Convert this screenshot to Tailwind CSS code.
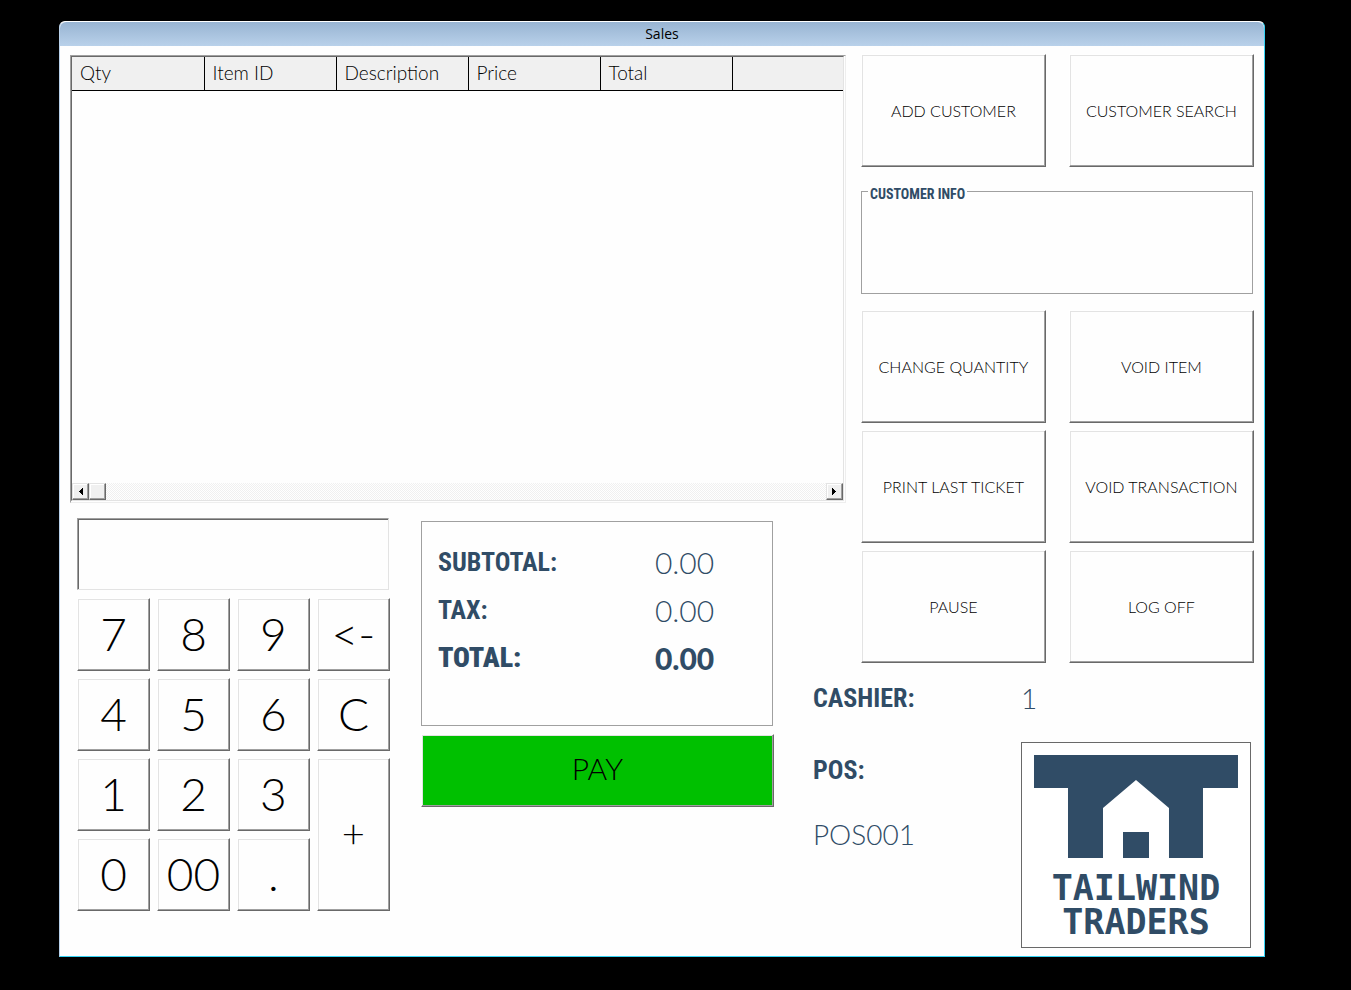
<!DOCTYPE html>
<html lang="en">
<head>
<meta charset="utf-8">
<meta name="viewport" content="width=device-width, initial-scale=1">
<title>Sales</title>
<script src="https://cdn.jsdelivr.net/npm/@tailwindcss/browser@4"></script>
</head>
<body class="flex min-h-screen bg-black pt-[21px] pr-[86px] pb-[33px] pl-[59px] font-['Lato','Open_Sans',sans-serif] font-light text-black">
<main class="flex grow flex-col rounded-t-md border border-t-white border-r-[#35d3f5] border-b-[#35d3f5] border-l-[#b9d1ea] bg-[#fefefe]">
  <header class="flex h-6 items-center justify-center rounded-t-md bg-linear-to-b from-[#98b4d2] to-[#b9d1ea]">
    <h1 class="font-['Open_Sans','Noto_Sans',sans-serif] text-sm font-normal">Sales</h1>
  </header>

  <div class="grid grow grid-cols-[minmax(0,320fr)_minmax(0,423fr)_48px_minmax(0,393fr)] grid-rows-[minmax(449px,auto)_minmax(160px,auto)_auto] px-[10px] pt-2 pb-2">

    <!-- Ticket lines -->
    <section aria-label="Ticket items" class="col-span-3 col-start-1 row-start-1 mt-px mr-[15px] flex border border-t-[#a0a0a0] border-r-[#eeeeee] border-b-[#eeeeee] border-l-[#a0a0a0]">
      <div class="mr-px mb-px flex grow flex-col border border-t-[#696969] border-r-[#e3e3e3] border-b-[#e3e3e3] border-l-[#696969]">
        <table class="w-full table-fixed border-collapse text-left text-[19px]">
          <thead>
            <tr class="h-[33px] border-b border-black bg-[#f0f0f0] leading-[30px]">
              <th scope="col" class="w-[132px] border-r border-black px-2 font-light">Qty</th>
              <th scope="col" class="w-[132px] border-r border-black px-2 font-light">Item ID</th>
              <th scope="col" class="w-[132px] border-r border-black px-2 font-light">Description</th>
              <th scope="col" class="w-[132px] border-r border-black px-2 font-light">Price</th>
              <th scope="col" class="w-[132px] border-r border-black px-2 font-light">Total</th>
              <td></td>
            </tr>
          </thead>
          <tbody></tbody>
        </table>
        <div class="mt-auto flex h-[17px] bg-[repeating-conic-gradient(#f0f0f0_0_25%,#ffffff_0_50%)] bg-size-[2px_2px]">
          <button type="button" aria-label="Scroll left" class="flex size-[17px] items-center justify-center border border-t-[#e3e3e3] border-r-[#696969] border-b-[#696969] border-l-[#e3e3e3] bg-[#f0f0f0] shadow-[inset_-1px_-1px_#a0a0a0,inset_1px_1px_#ffffff]">
            <svg class="h-[7px] w-1" viewBox="0 0 4 7" shape-rendering="crispEdges"><path d="M4 0v7L0 3.500z"/></svg>
          </button>
          <button type="button" aria-label="Scroll position" class="size-[17px] border border-t-[#e3e3e3] border-r-[#696969] border-b-[#696969] border-l-[#e3e3e3] bg-[#f0f0f0] shadow-[inset_-1px_-1px_#a0a0a0,inset_1px_1px_#ffffff]"></button>
          <button type="button" aria-label="Scroll right" class="ml-auto flex size-[17px] items-center justify-center border border-t-[#e3e3e3] border-r-[#696969] border-b-[#696969] border-l-[#e3e3e3] bg-[#f0f0f0] shadow-[inset_-1px_-1px_#a0a0a0,inset_1px_1px_#ffffff]">
            <svg class="h-[7px] w-1" viewBox="0 0 4 7" shape-rendering="crispEdges"><path d="M0 0v7L4 3.500z"/></svg>
          </button>
        </div>
      </div>
    </section>

    <!-- Customer and transaction actions -->
    <section aria-label="Actions" class="col-start-4 row-span-2 row-start-1 grid grid-cols-2 content-start gap-x-[23px] gap-y-[7px] text-base">
      <button type="button" class="h-[113px] border border-t-white border-r-[#696969] border-b-[#696969] border-l-white shadow-[inset_-1px_-1px_#a0a0a0,inset_1px_1px_#e3e3e3]">ADD CUSTOMER</button>
      <button type="button" class="h-[113px] border border-t-white border-r-[#696969] border-b-[#696969] border-l-white shadow-[inset_-1px_-1px_#a0a0a0,inset_1px_1px_#e3e3e3]">CUSTOMER SEARCH</button>
      <fieldset class="col-span-2 mt-[5px] mr-px mb-[9px] h-[115px] border border-[#a0a0a0] px-[6px]">
        <legend class="px-0.5 pt-[6px] font-['Roboto_Condensed','Liberation_Sans_Narrow',sans-serif] text-sm leading-[18px] font-bold text-[#304c66]">CUSTOMER INFO</legend>
      </fieldset>
      <button type="button" class="h-[113px] border border-t-white border-r-[#696969] border-b-[#696969] border-l-white shadow-[inset_-1px_-1px_#a0a0a0,inset_1px_1px_#e3e3e3]">CHANGE QUANTITY</button>
      <button type="button" class="h-[113px] border border-t-white border-r-[#696969] border-b-[#696969] border-l-white shadow-[inset_-1px_-1px_#a0a0a0,inset_1px_1px_#e3e3e3]">VOID ITEM</button>
      <button type="button" class="h-[113px] border border-t-white border-r-[#696969] border-b-[#696969] border-l-white shadow-[inset_-1px_-1px_#a0a0a0,inset_1px_1px_#e3e3e3]">PRINT LAST TICKET</button>
      <button type="button" class="h-[113px] border border-t-white border-r-[#696969] border-b-[#696969] border-l-white shadow-[inset_-1px_-1px_#a0a0a0,inset_1px_1px_#e3e3e3]">VOID TRANSACTION</button>
      <button type="button" class="h-[113px] border border-t-white border-r-[#696969] border-b-[#696969] border-l-white shadow-[inset_-1px_-1px_#a0a0a0,inset_1px_1px_#e3e3e3]">PAUSE</button>
      <button type="button" class="h-[113px] border border-t-white border-r-[#696969] border-b-[#696969] border-l-white shadow-[inset_-1px_-1px_#a0a0a0,inset_1px_1px_#e3e3e3]">LOG OFF</button>
    </section>

    <!-- Keypad -->
    <section aria-label="Keypad" class="col-start-1 row-span-2 row-start-2 grid grid-cols-4 content-start gap-[7px] pt-[15px] pl-[7px] text-[46px] leading-none">
      <input type="text" aria-label="Entry" class="col-span-4 mb-px h-[72px] w-[calc(100%-1px)] border border-t-[#a0a0a0] border-r-[#e3e3e3] border-b-[#e3e3e3] border-l-[#a0a0a0] px-2 shadow-[inset_1px_1px_#696969]">
      <button type="button" class="h-[73px] border border-t-white border-r-[#696969] border-b-[#696969] border-l-white pb-0.5 shadow-[inset_-1px_-1px_#a0a0a0,inset_1px_1px_#e3e3e3]">7</button>
      <button type="button" class="h-[73px] border border-t-white border-r-[#696969] border-b-[#696969] border-l-white pb-0.5 shadow-[inset_-1px_-1px_#a0a0a0,inset_1px_1px_#e3e3e3]">8</button>
      <button type="button" class="h-[73px] border border-t-white border-r-[#696969] border-b-[#696969] border-l-white pb-0.5 shadow-[inset_-1px_-1px_#a0a0a0,inset_1px_1px_#e3e3e3]">9</button>
      <button type="button" class="h-[73px] border border-t-white border-r-[#696969] border-b-[#696969] border-l-white pb-0.5 shadow-[inset_-1px_-1px_#a0a0a0,inset_1px_1px_#e3e3e3]">&lt;-</button>
      <button type="button" class="h-[73px] border border-t-white border-r-[#696969] border-b-[#696969] border-l-white pb-0.5 shadow-[inset_-1px_-1px_#a0a0a0,inset_1px_1px_#e3e3e3]">4</button>
      <button type="button" class="h-[73px] border border-t-white border-r-[#696969] border-b-[#696969] border-l-white pb-0.5 shadow-[inset_-1px_-1px_#a0a0a0,inset_1px_1px_#e3e3e3]">5</button>
      <button type="button" class="h-[73px] border border-t-white border-r-[#696969] border-b-[#696969] border-l-white pb-0.5 shadow-[inset_-1px_-1px_#a0a0a0,inset_1px_1px_#e3e3e3]">6</button>
      <button type="button" class="h-[73px] border border-t-white border-r-[#696969] border-b-[#696969] border-l-white pb-0.5 shadow-[inset_-1px_-1px_#a0a0a0,inset_1px_1px_#e3e3e3]">C</button>
      <button type="button" class="h-[73px] border border-t-white border-r-[#696969] border-b-[#696969] border-l-white pb-0.5 shadow-[inset_-1px_-1px_#a0a0a0,inset_1px_1px_#e3e3e3]">1</button>
      <button type="button" class="h-[73px] border border-t-white border-r-[#696969] border-b-[#696969] border-l-white pb-0.5 shadow-[inset_-1px_-1px_#a0a0a0,inset_1px_1px_#e3e3e3]">2</button>
      <button type="button" class="h-[73px] border border-t-white border-r-[#696969] border-b-[#696969] border-l-white pb-0.5 shadow-[inset_-1px_-1px_#a0a0a0,inset_1px_1px_#e3e3e3]">3</button>
      <button type="button" class="row-span-2 border border-t-white border-r-[#696969] border-b-[#696969] border-l-white pb-1 text-[40px] shadow-[inset_-1px_-1px_#a0a0a0,inset_1px_1px_#e3e3e3]">+</button>
      <button type="button" class="h-[73px] border border-t-white border-r-[#696969] border-b-[#696969] border-l-white pb-0.5 shadow-[inset_-1px_-1px_#a0a0a0,inset_1px_1px_#e3e3e3]">0</button>
      <button type="button" class="h-[73px] border border-t-white border-r-[#696969] border-b-[#696969] border-l-white pb-0.5 shadow-[inset_-1px_-1px_#a0a0a0,inset_1px_1px_#e3e3e3]">00</button>
      <button type="button" class="h-[73px] border border-t-white border-r-[#696969] border-b-[#696969] border-l-white pb-0.5 shadow-[inset_-1px_-1px_#a0a0a0,inset_1px_1px_#e3e3e3]">.</button>
    </section>

    <!-- Totals and payment -->
    <section aria-label="Totals" class="col-start-2 row-span-2 row-start-2 flex flex-col gap-2 pt-[18px] pr-[39px] pl-[31px]">
      <dl class="mr-px grid h-[205px] grid-cols-[217fr_117fr] content-start border border-[#a0a0a0] pt-4 pl-4 leading-[48px] text-[#304c66]">
        <dt class="font-['Roboto_Condensed','Liberation_Sans_Narrow',sans-serif] text-[26px] font-bold">SUBTOTAL:</dt>
        <dd class="text-[30px] font-light">0.00</dd>
        <dt class="font-['Roboto_Condensed','Liberation_Sans_Narrow',sans-serif] text-[26px] font-bold">TAX:</dt>
        <dd class="text-[30px] font-light">0.00</dd>
        <dt class="font-['Roboto_Condensed','Liberation_Sans_Narrow',sans-serif] text-[28px] font-black">TOTAL:</dt>
        <dd class="text-[30px] font-black">0.00</dd>
      </dl>
      <button type="button" class="h-[73px] border border-t-white border-r-[#696969] border-b-[#696969] border-l-white bg-[#00c000] pb-1 text-[30px] font-light shadow-[inset_-1px_-1px_#a0a0a0,inset_1px_1px_#e3e3e3]">PAY</button>
    </section>

    <!-- Register details -->
    <section aria-label="Register" class="col-span-2 col-start-3 row-start-3 grid grid-cols-[208fr_233fr] content-start pt-[11px] text-[28px] leading-[48px] text-[#304c66]">
      <h2 class="font-['Roboto_Condensed','Liberation_Sans_Narrow',sans-serif] text-[26px] font-bold">CASHIER:</h2>
      <p class="font-light">1</p>
      <div class="pt-6">
        <h2 class="font-['Roboto_Condensed','Liberation_Sans_Narrow',sans-serif] text-[26px] font-bold">POS:</h2>
        <p class="pt-4 font-light">POS001</p>
      </div>
      <div class="mt-5 mr-[3px] border border-[#696969] bg-white">
        <svg class="block h-[204px] w-full" viewBox="1 1 228 204" role="img" aria-label="Tailwind Traders" fill="#304c66">
          <path d="M13 13H217V46H182V116H148V66L115 38L82 66V116H47V46H13z"/>
          <path d="M102 90h26v26h-26z"/>
          <g font-family="'DejaVu Sans Mono','Liberation Mono',monospace" font-size="35" font-weight="700" text-anchor="middle">
            <text x="115" y="158">TAILWIND</text>
            <text x="115" y="192">TRADERS</text>
          </g>
        </svg>
      </div>
    </section>
  </div>
</main>
</body>
</html>
